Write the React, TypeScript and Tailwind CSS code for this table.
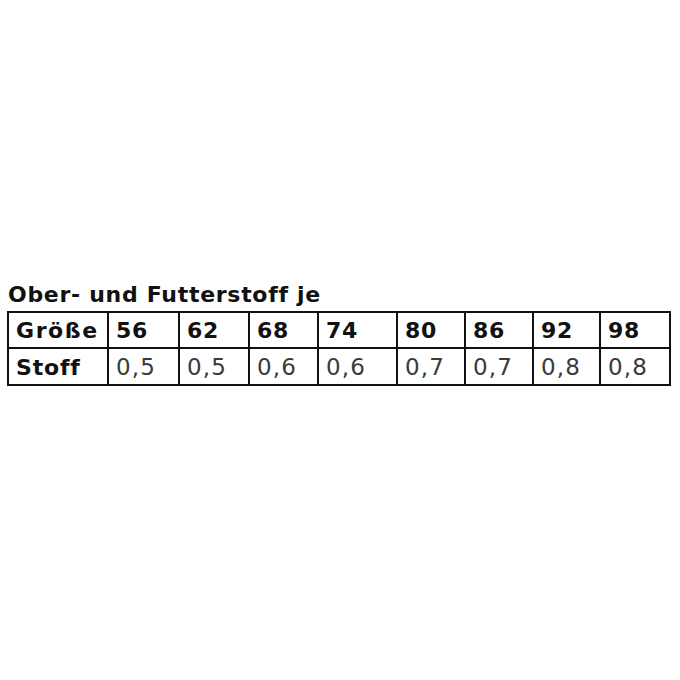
import React from "react";

const sizes = ["56", "62", "68", "74", "80", "86", "92", "98"];
const values = ["0,5", "0,5", "0,6", "0,6", "0,7", "0,7", "0,8", "0,8"];
const widths = ["w-[71px]", "w-[70px]", "w-[69px]", "w-[79px]", "w-[68px]", "w-[68px]", "w-[67px]", "w-[70px]"];

export default function App() {
  return (
    <div className="w-[680px] h-[680px] bg-white pt-[281px] pl-[7px] font-['DejaVu_Sans',Verdana,sans-serif]">
      <div className="text-[22px] font-bold text-[#111] leading-[27px] pl-[1px] tracking-[0.7px]">Ober- und Futterstoff je</div>
      <table className="border-collapse border-2 border-[#111] mt-[3px]">
        <tbody>
          <tr className="h-[36px]">
            <td className="w-[100px] border-2 border-[#111] pl-[7px] pt-[2px] text-[22px] font-bold text-[#111] leading-none tracking-[1.6px]">Größe</td>
            {sizes.map((s, i) => (
              <td key={s} className={`${widths[i]} border-2 border-[#111] pl-[7px] pt-[2px] text-[22px] font-bold text-[#111] leading-none tracking-[0.8px]`}>
                {s}
              </td>
            ))}
          </tr>
          <tr className="h-[37px]">
            <td className="border-2 border-[#111] pl-[7px] pt-[2px] text-[22px] font-bold text-[#111] leading-none tracking-[0.8px]">Stoff</td>
            {values.map((v, i) => (
              <td key={i} className="border-2 border-[#111] pl-[7px] pt-[2px] text-[23px] text-[#3a3a3a] leading-none tracking-[1.2px]">
                {v}
              </td>
            ))}
          </tr>
        </tbody>
      </table>
    </div>
  );
}
